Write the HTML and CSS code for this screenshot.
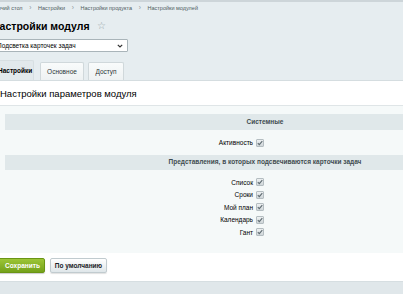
FILE: index.html
```html
<!DOCTYPE html>
<html lang="ru">
<head>
<meta charset="utf-8">
<title>Настройки модуля</title>
<link rel="stylesheet" href="styles.css">
</head>
<body>
<div class="topline"></div>
<div class="page">
  <div class="crumbs">
    <span class="crumb">Рабочий стол</span><span class="sep">›</span>
    <span class="crumb">Настройки</span><span class="sep">›</span>
    <span class="crumb">Настройки продукта</span><span class="sep">›</span>
    <span class="crumb">Настройки модулей</span>
  </div>
  <div class="title-row">
    <h1 class="title">Настройки модуля</h1>
    <span class="star">☆</span>
  </div>
  <div class="select">
    <span>Подсветка карточек задач</span>
    <svg class="chev" width="6" height="4" viewBox="0 0 6 4"><path d="M0.8 0.8 L3 3 L5.2 0.8" fill="none" stroke="#333" stroke-width="1.2"/></svg>
  </div>
  <div class="tabs">
    <div class="tab active">Настройки</div>
    <div class="tab t2">Основное</div>
    <div class="tab t3">Доступ</div>
  </div>
  <div class="panel">
    <div class="panel-title">Настройки параметров модуля</div>
    <div class="content">
      <div class="form">
        <div class="heading h1">Системные</div>
        <div class="row single"><span class="lbl">Активность</span><span class="cb"><svg width="8" height="8" viewBox="0 0 8 8"><path d="M1.8 4.2 L3.3 5.7 L6.3 2.2" fill="none" stroke="#5d6a70" stroke-width="1.1"/></svg></span></div>
        <div class="heading h2">Представления, в которых подсвечиваются карточки задач</div>
        <div class="rows">
          <div class="row"><span class="lbl">Список</span><span class="cb"><svg width="8" height="8" viewBox="0 0 8 8"><path d="M1.8 4.2 L3.3 5.7 L6.3 2.2" fill="none" stroke="#5d6a70" stroke-width="1.1"/></svg></span></div>
          <div class="row"><span class="lbl">Сроки</span><span class="cb"><svg width="8" height="8" viewBox="0 0 8 8"><path d="M1.8 4.2 L3.3 5.7 L6.3 2.2" fill="none" stroke="#5d6a70" stroke-width="1.1"/></svg></span></div>
          <div class="row"><span class="lbl">Мой план</span><span class="cb"><svg width="8" height="8" viewBox="0 0 8 8"><path d="M1.8 4.2 L3.3 5.7 L6.3 2.2" fill="none" stroke="#5d6a70" stroke-width="1.1"/></svg></span></div>
          <div class="row"><span class="lbl">Календарь</span><span class="cb"><svg width="8" height="8" viewBox="0 0 8 8"><path d="M1.8 4.2 L3.3 5.7 L6.3 2.2" fill="none" stroke="#5d6a70" stroke-width="1.1"/></svg></span></div>
          <div class="row"><span class="lbl">Гант</span><span class="cb"><svg width="8" height="8" viewBox="0 0 8 8"><path d="M1.8 4.2 L3.3 5.7 L6.3 2.2" fill="none" stroke="#5d6a70" stroke-width="1.1"/></svg></span></div>
        </div>
      </div>
    </div>
    <div class="buttons">
      <button class="btn save">Сохранить</button>
      <button class="btn def">По умолчанию</button>
    </div>
  </div>
  <div class="footer"></div>
</div>
</body>
</html>
```

FILE: styles.css
```css
html, body {
  margin: 0;
  padding: 0;
  overflow: hidden;
  height: 100%;
}
body {
  background: #e6edf0;
  font-family: "Liberation Sans", Arial, sans-serif;
  color: #000;
}
.topline {
  height: 2px;
  background: #cdd5d9;
}
.page {
  margin-left: -12px;
  width: 560px;
}
.crumbs {
  height: 12px;
  line-height: 12px;
  font-size: 5.5px;
  color: #4f5c61;
  padding-left: 0;
  display: flex;
  align-items: center;
}
.sep {
  color: #8a969b;
  margin: 0 6.7px;
  font-size: 6.5px;
}
.title-row {
  margin-top: 3px;
  height: 17px;
  display: flex;
  align-items: center;
  padding-left: 4px;
}
.title {
  margin: 0;
  font-size: 10.5px;
  font-weight: bold;
  color: #000;
}
.star {
  margin-left: 7px;
  font-size: 10px;
  color: #9aa6ab;
}
.select {
  margin-top: 5px;
  margin-left: 4px;
  width: 127px;
  height: 11px;
  border: 1px solid #a9b4b9;
  border-radius: 1px;
  background: #fff;
  font-size: 6.5px;
  color: #000;
  display: flex;
  align-items: center;
  justify-content: space-between;
  padding: 0 4px 0 3px;
  box-sizing: content-box;
}
.select span { margin-left: 1px; }
.tabs {
  margin-top: 8px;
  margin-left: 4px;
  display: flex;
  height: 20px;
  align-items: flex-end;
}
.tab {
  box-sizing: border-box;
  height: 18px;
  line-height: 17px;
  font-size: 6.5px;
  color: #2c3639;
  background: linear-gradient(#f9fbfb, #eef2f3);
  border: 1px solid #d0d8db;
  border-bottom: none;
  border-radius: 2px 2px 0 0;
  text-align: center;
}
.tab.active {
  background: #e2e9ec;
  border-color: #d7dfe2;
  color: #000;
  font-weight: bold;
  width: 42px;
  height: 20px;
  line-height: 19px;
  text-align: left;
  padding-left: 5px;
}
.tab.t2 { width: 44px; margin-left: 6px; }
.tab.t3 { width: 36px; margin-left: 4px; }
.panel {
  background: #fff;
  border-top: 1px solid #d5dde0;
}
.panel-title {
  height: 24px;
  line-height: 25px;
  font-size: 9.5px;
  padding-left: 12px;
  border-bottom: 1px solid #dfe5e7;
  color: #000;
}
.content {
  background: #f5f9f9;
  padding: 8px 0 14px 17px;
}
.form {
  width: 520px;
}
.heading {
  background: #e0e8ea;
  color: #3f4c50;
  font-weight: bold;
  font-size: 6.5px;
  text-align: center;
}
.heading.h1 { height: 16px; line-height: 16px; }
.heading.h2 { height: 15px; line-height: 14px; }
.row {
  display: grid;
  grid-template-columns: 248px 1fr;
  column-gap: 3px;
  align-items: center;
  height: 12px;
  font-size: 6.5px;
  color: #000;
}
.row.single { height: 25px; }
.rows { padding-top: 6px; }
.rows .row { height: 12.5px; }
.lbl { text-align: right; }
.cb {
  width: 8px;
  height: 8px;
  box-sizing: border-box;
  border: 1px solid #b4bdc1;
  border-radius: 1px;
  background: linear-gradient(#eef1f2, #cfd6d9);
  display: flex;
  align-items: center;
  justify-content: center;
}
.cb svg { display: block; margin: -1px; }
.buttons {
  display: flex;
  gap: 5px;
  padding: 5px 0 8px 12px;
  background: #fff;
}
.btn {
  height: 15px;
  font-family: "Liberation Sans", Arial, sans-serif;
  font-size: 6.5px;
  font-weight: bold;
  border-radius: 2px;
  padding: 0;
  cursor: pointer;
  width: 57px;
}
.btn.save {
  background: linear-gradient(#9cc536, #74a11a);
  border: 1px solid #6a9514;
  color: #fff;
  margin-left: -12px;
  padding-left: 12px;
  box-shadow: 0 1px 1px rgba(0,0,0,0.2);
}
.btn.def {
  background: linear-gradient(#ffffff, #dfe6e9);
  border: 1px solid #c1cbcf;
  color: #1c2326;
  box-shadow: 0 1px 1px rgba(0,0,0,0.12);
}
.footer {
  height: 40px;
  background: #e0e7ea;
  border-top: 1px solid #d6dee1;
}
```
